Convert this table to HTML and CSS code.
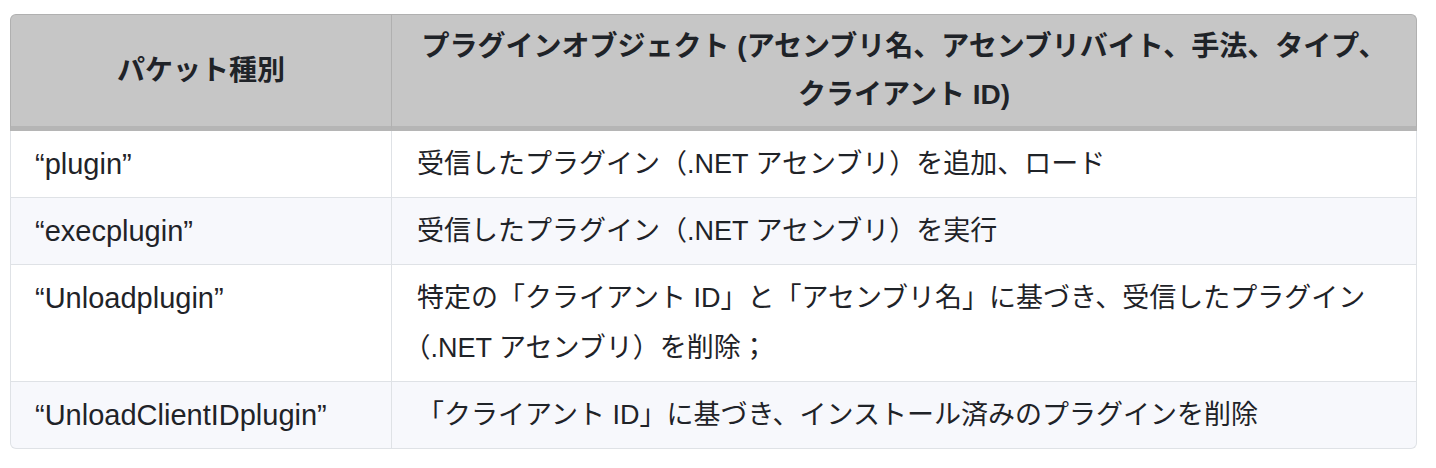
FILE: index.html
```html
<!DOCTYPE html>
<html lang="ja">
<head>
<meta charset="utf-8">
<link rel="stylesheet" href="styles.css">
</head>
<body>
<div class="page">
  <table class="spec">
    <thead>
      <tr>
        <th class="col-type">パケット種別</th>
        <th class="col-desc">プラグインオブジェクト (アセンブリ名、アセンブリバイト、手法、タイプ、クライアント ID)</th>
      </tr>
    </thead>
    <tbody>
      <tr>
        <td class="key">“plugin”</td>
        <td class="desc">受信したプラグイン（.NET アセンブリ）を追加、ロード</td>
      </tr>
      <tr>
        <td class="key">“execplugin”</td>
        <td class="desc">受信したプラグイン（.NET アセンブリ）を実行</td>
      </tr>
      <tr>
        <td class="key">“Unloadplugin”</td>
        <td class="desc">特定の「クライアント ID」と「アセンブリ名」に基づき、受信したプラグイン（.NET アセンブリ）を削除；</td>
      </tr>
      <tr>
        <td class="key">“UnloadClientIDplugin”</td>
        <td class="desc">「クライアント ID」に基づき、インストール済みのプラグインを削除</td>
      </tr>
    </tbody>
  </table>
</div>
</body>
</html>
```

FILE: styles.css
```css
html, body {
  margin: 0;
  padding: 0;
  background: #ffffff;
}

.page {
  padding: 14px 19px 0 10px;
}

.spec {
  width: 1407px;
  border-collapse: separate;
  border-spacing: 0;
  font-family: "Liberation Sans", "Noto Sans CJK JP", sans-serif;
  font-size: 27px;
  color: #1f2328;
  table-layout: fixed;
  text-spacing-trim: space-first;
}

.spec th,
.spec td {
  box-sizing: border-box;
}

.col-type {
  width: 382px;
}

.spec th {
  background: #c6c6c6;
  font-size: 28px;
  font-weight: 700;
  text-align: center;
  line-height: 48px;
  padding: 8px 22px 7px 22px;
  border-top: 1px solid #b0b0b0;
  border-right: 1px solid #b0b0b0;
  border-bottom: 5px solid #b5b5b5;
}

.spec th:first-child {
  border-left: 1px solid #b0b0b0;
  border-top-left-radius: 6px;
}

.spec th:last-child {
  border-top-right-radius: 6px;
}

.spec td {
  line-height: 50px;
  padding: 8px 20px 8px 25px;
  border-right: 1px solid #dfe2e6;
  border-bottom: 1px solid #dfe2e6;
  vertical-align: top;
  background: #ffffff;
}

.spec td.key {
  font-size: 29px;
  padding-left: 24px;
}

.spec td:first-child {
  border-left: 1px solid #dfe2e6;
}

.spec tbody tr:nth-child(even) td {
  background: #f7f8fc;
}

.spec tbody tr:last-child td:first-child {
  border-bottom-left-radius: 6px;
}

.spec tbody tr:last-child td:last-child {
  border-bottom-right-radius: 6px;
}
```
